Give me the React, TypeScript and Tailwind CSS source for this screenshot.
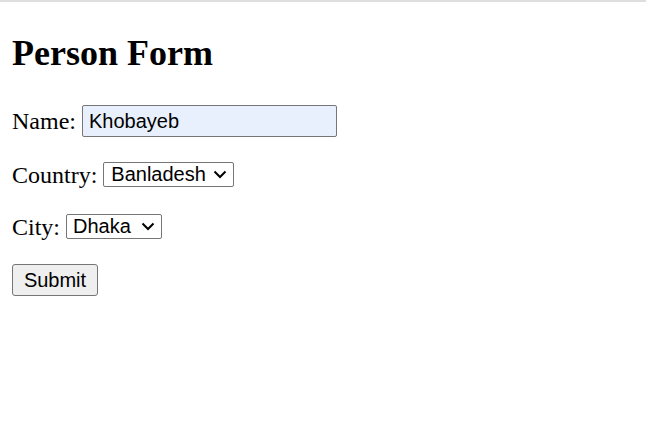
import React from "react";

const Chevron = () => (
  <svg width="14" height="9" viewBox="0 0 14 9" className="pointer-events-none absolute" style={{ right: 7, top: 8 }}>
    <path d="M1.5 1.5 L7 7 L12.5 1.5" fill="none" stroke="#000" strokeWidth="2" />
  </svg>
);

export default function App() {
  return (
    <div className="w-[646px] h-[442px] bg-white overflow-hidden border-t-2 border-[#dedede] font-['Liberation_Serif',serif] text-black">
      <div className="pl-[12px]">
        <h1 className="mt-[30px] text-[36px] leading-[42px] font-bold">Person Form</h1>
        <div className="mt-[31px] flex items-center h-[32px] text-[24px]">
          <span>Name:</span>
          <input
            defaultValue="Khobayeb"
            className="ml-[6px] w-[255px] h-[32px] px-[6px] bg-[#e8f0fe] border border-[#767676] rounded-[2px] font-['Liberation_Sans',sans-serif] text-[20px] outline-none"
          />
        </div>
        <div className="mt-[25px] flex items-center h-[25px] text-[24px]">
          <span>Country:</span>
          <div className="relative ml-[6px] flex">
            <select
              defaultValue="Banladesh"
              className="appearance-none w-[131px] h-[25px] pl-[7px] pr-[26px] bg-white border border-[#767676] rounded-[2px] font-['Liberation_Sans',sans-serif] text-[20px] leading-[23px] outline-none"
            >
              <option>Banladesh</option>
            </select>
            <Chevron />
          </div>
        </div>
        <div className="mt-[27px] flex items-center h-[25px] text-[24px]">
          <span>City:</span>
          <div className="relative ml-[6px] flex">
            <select
              defaultValue="Dhaka"
              className="appearance-none w-[96px] h-[25px] pl-[6px] pr-[26px] bg-white border border-[#767676] rounded-[2px] font-['Liberation_Sans',sans-serif] text-[20px] leading-[23px] outline-none"
            >
              <option>Dhaka</option>
            </select>
            <Chevron />
          </div>
        </div>
        <div className="mt-[25px] flex">
          <button className="w-[86px] h-[32px] bg-[#efefef] border border-[#767676] rounded-[3px] font-['Liberation_Sans',sans-serif] text-[20px] leading-[30px] text-black">
            Submit
          </button>
        </div>
      </div>
    </div>
  );
}
